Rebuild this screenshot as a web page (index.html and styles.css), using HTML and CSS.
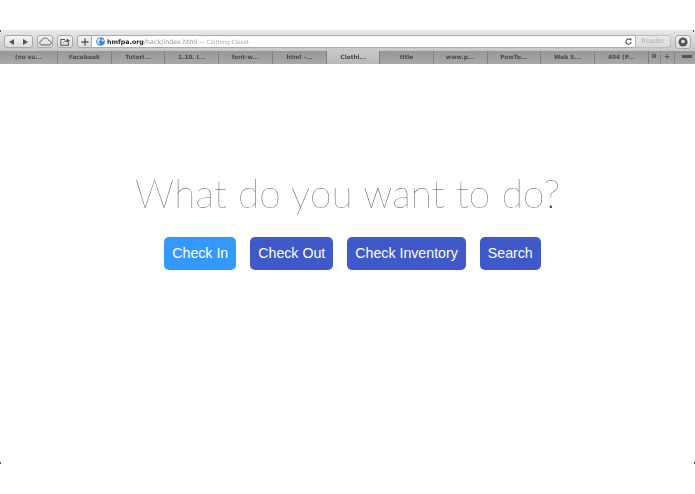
FILE: index.html
```html
<!DOCTYPE html>
<html lang="en">
<head>
<meta charset="utf-8">
<title>Clothing Closet</title>
<link rel="stylesheet" href="styles.css">
</head>
<body>
<div class="chrome">
  <div class="toolbar">
    <div class="tool nav">
      <span class="nav-half"><svg width="8" height="8" viewBox="0 0 8 8"><path d="M6 1v6L1 4z" fill="#555"/></svg></span>
      <span class="nav-half"><svg width="8" height="8" viewBox="0 0 8 8"><path d="M2 1v6l5-3z" fill="#555"/></svg></span>
    </div>
    <div class="tool cloud"><svg width="13" height="9" viewBox="0 0 15 10"><path d="M3.500 9C1.800 9 .8 7.900.8 6.600c0-1.200.9-2.100 2-2.300C3.200 2.300 5 .9 7.200.9c2.100 0 3.700 1.300 4.200 3.200 1.600.1 2.800 1.200 2.800 2.500C14.200 8 13.100 9 11.500 9z" fill="none" stroke="#555" stroke-width="1.100"/></svg></div>
    <div class="tool share"><svg width="11" height="9" viewBox="0 0 13 10"><path d="M1 2.500h5M1 2v7.500h9V6" fill="none" stroke="#555" stroke-width="1.200"/><path d="M3.500 7C4 4.500 6 3.500 8 3.500V1.500L12 4 8 6.500V5C6 5 4.500 5.500 3.500 7z" fill="#555"/></svg></div>
    <div class="tool add"><svg width="8" height="8" viewBox="0 0 9 9"><path d="M4.500 .5v8M.5 4.500h8" stroke="#555" stroke-width="1.500"/></svg></div>
    <div class="address">
      <svg class="globe" width="9" height="9" viewBox="0 0 9 9"><circle cx="4.500" cy="4.500" r="4.300" fill="#3f83c9"/><path d="M2 1.500c1.500-.5 2.500 0 2.500 1S3 4 3 5s1 1 1.200 2.500C2.500 7.500 1 6 1 4.500 1 3.300 1.400 2.200 2 1.500zM6 2c1 0 1.800 1 1.800 2.500C7 5 6 4.500 5.500 3.500 5.300 3 5.500 2.300 6 2z" fill="#cfe3f5"/></svg>
      <span class="url"><b>hmfpa.org</b><span class="path">/hack/index.html</span><span class="page-title"> — Clothing Closet</span></span>
      <svg class="reload" width="7" height="7" viewBox="0 0 8 8"><path d="M6.500 2.500A3 3 0 1 0 7 4.500" fill="none" stroke="#444" stroke-width="1.200"/><path d="M5 .5L7.500 .7 7 3.200z" fill="#444"/></svg>
    </div>
    <div class="reader">Reader</div>
    <div class="tool download"><svg width="10" height="10" viewBox="0 0 11 11"><circle cx="5.500" cy="5.500" r="5" fill="#555"/><circle cx="5.500" cy="5" r="2" fill="#e4e4e4"/></svg></div>
  </div>
  <div class="tabbar">
    <div class="tab first">(no su...</div>
    <div class="tab">Facebook</div>
    <div class="tab">Tutori...</div>
    <div class="tab">1.10. I...</div>
    <div class="tab">font-w...</div>
    <div class="tab">html -...</div>
    <div class="tab active">Clothi...</div>
    <div class="tab">title</div>
    <div class="tab">www.p...</div>
    <div class="tab">PowTo...</div>
    <div class="tab">Web S...</div>
    <div class="tab">404 (P...</div>
    <div class="tab-more">&raquo;</div>
    <div class="tab-plus">+</div>
    <div class="tab-list"></div>
  </div>
</div>
<main class="content">
  <h1 class="question">What do you want to do?</h1>
  <div class="actions">
    <a class="btn btn-light">Check In</a>
    <a class="btn">Check Out</a>
    <a class="btn">Check Inventory</a>
    <a class="btn">Search</a>
  </div>
</main>
<span class="corner c-tl"></span><span class="corner c-tr"></span><span class="corner c-bl"></span><span class="corner c-br"></span>
</body>
</html>
```
FILE: styles.css
```css
html, body { margin: 0; padding: 0; background: #fff; }
body { width: 695px; height: 494px; overflow: hidden; font-family: "Liberation Sans", Arial, sans-serif; }

.chrome { padding-top: 30px; filter: blur(.45px); }
.toolbar {
  height: 21px; box-sizing: border-box; display: flex; align-items: center;
  padding: 2px 4px 0 4px; background: linear-gradient(#e8e8e8, #c6c6c6);
}
.tool {
  height: 13px; box-sizing: border-box; border: 1px solid #a8a8a8; border-radius: 3px;
  background: linear-gradient(#f4f4f4, #dcdcdc); display: flex; align-items: center; justify-content: center;
}
.nav { width: 29px; margin-right: 4px; }
.nav-half { flex: 1; display: flex; justify-content: center; }
.cloud { width: 16px; margin-right: 4px; }
.share { width: 16px; margin-right: 4px; }
.add { width: 15px; border-radius: 3px 0 0 3px; }
.address {
  flex: 1; height: 13px; box-sizing: border-box; display: flex; align-items: center;
  background: #fff; border: 1px solid #aaa; border-left: 0; border-right: 0; padding: 0 3px 0 4px;
}
.globe { margin-right: 2px; }
.url { flex: 1; font-size: 7.500px; white-space: nowrap; color: #222; font-family: "DejaVu Sans", sans-serif; }
.url b { font-weight: 700; font-size: 6.300px; }
.path { color: #999; font-size: 6.400px; }
.page-title { color: #aaa; font-size: 5.600px; }
.reader {
  width: 36px; height: 13px; box-sizing: border-box; border: 1px solid #bdbdbd;
  border-radius: 0 3px 3px 0; background: linear-gradient(#eaeaea, #dadada); color: #b0b0b0; font-size: 6.500px;
  font-family: "DejaVu Sans", sans-serif; line-height: 11px; text-align: center; margin-right: 4px;
}
.download { width: 16px; height: 14px; }

.tabbar { height: 13px; display: flex; background: linear-gradient(#979797, #a8a8a8); }
.tab {
  width: 53.700px; box-sizing: border-box; font-family: "DejaVu Sans", sans-serif; font-size: 5.800px; font-weight: 700;
  line-height: 12px; text-align: center; border-right: 1px solid #808080; white-space: nowrap; color: #4a4a4a;
}
.tab.first { width: 58px; }
.tab:nth-child(6) { border-right: 0; }
.tab.active { background: linear-gradient(#c8c8c8, #b8b8b8); border-right: 1px solid #808080; border-left: 1px solid #808080; color: #444; }
.tab-more { width: 11px; font-size: 10px; line-height: 10px; text-align: center; font-weight: 700; color: #444; }
.tab-plus { width: 15px; font-size: 9px; line-height: 12px; text-align: center; border-left: 1px solid #888; border-right: 1px solid #888; box-sizing: border-box; font-weight: 700; color: #555; }
.tab-list { flex: 1; position: relative; }
.tab-list::after { content: ""; position: absolute; left: 7px; top: 4px; width: 10px; height: 3px; background: #555; }

.content { display: flex; flex-direction: column; align-items: center; padding-top: 104px; }
.question {
  margin: 0; font-family: Lato, sans-serif; font-weight: 100; font-size: 39px; line-height: 50px; color: #444; white-space: nowrap; letter-spacing: .1px; filter: blur(.2px);
}
.actions { display: flex; gap: 14px; margin-top: 19px; padding-left: 10px; }
.btn {
  display: block; height: 33px; box-sizing: border-box; padding: 0 8px; border-radius: 5px; background: #3f5ac8;
  color: #fff; font-size: 14.200px; line-height: 33px; white-space: nowrap;
}
.btn-light { background: #3399ff; }
.corner { position: absolute; width: 1px; height: 2px; background: #555; }
.c-tl { left: 0; top: 30px; }
.c-tr { right: 1px; top: 30px; }
.c-bl { left: 0; top: 462px; }
.c-br { right: 0; top: 462px; }
```
